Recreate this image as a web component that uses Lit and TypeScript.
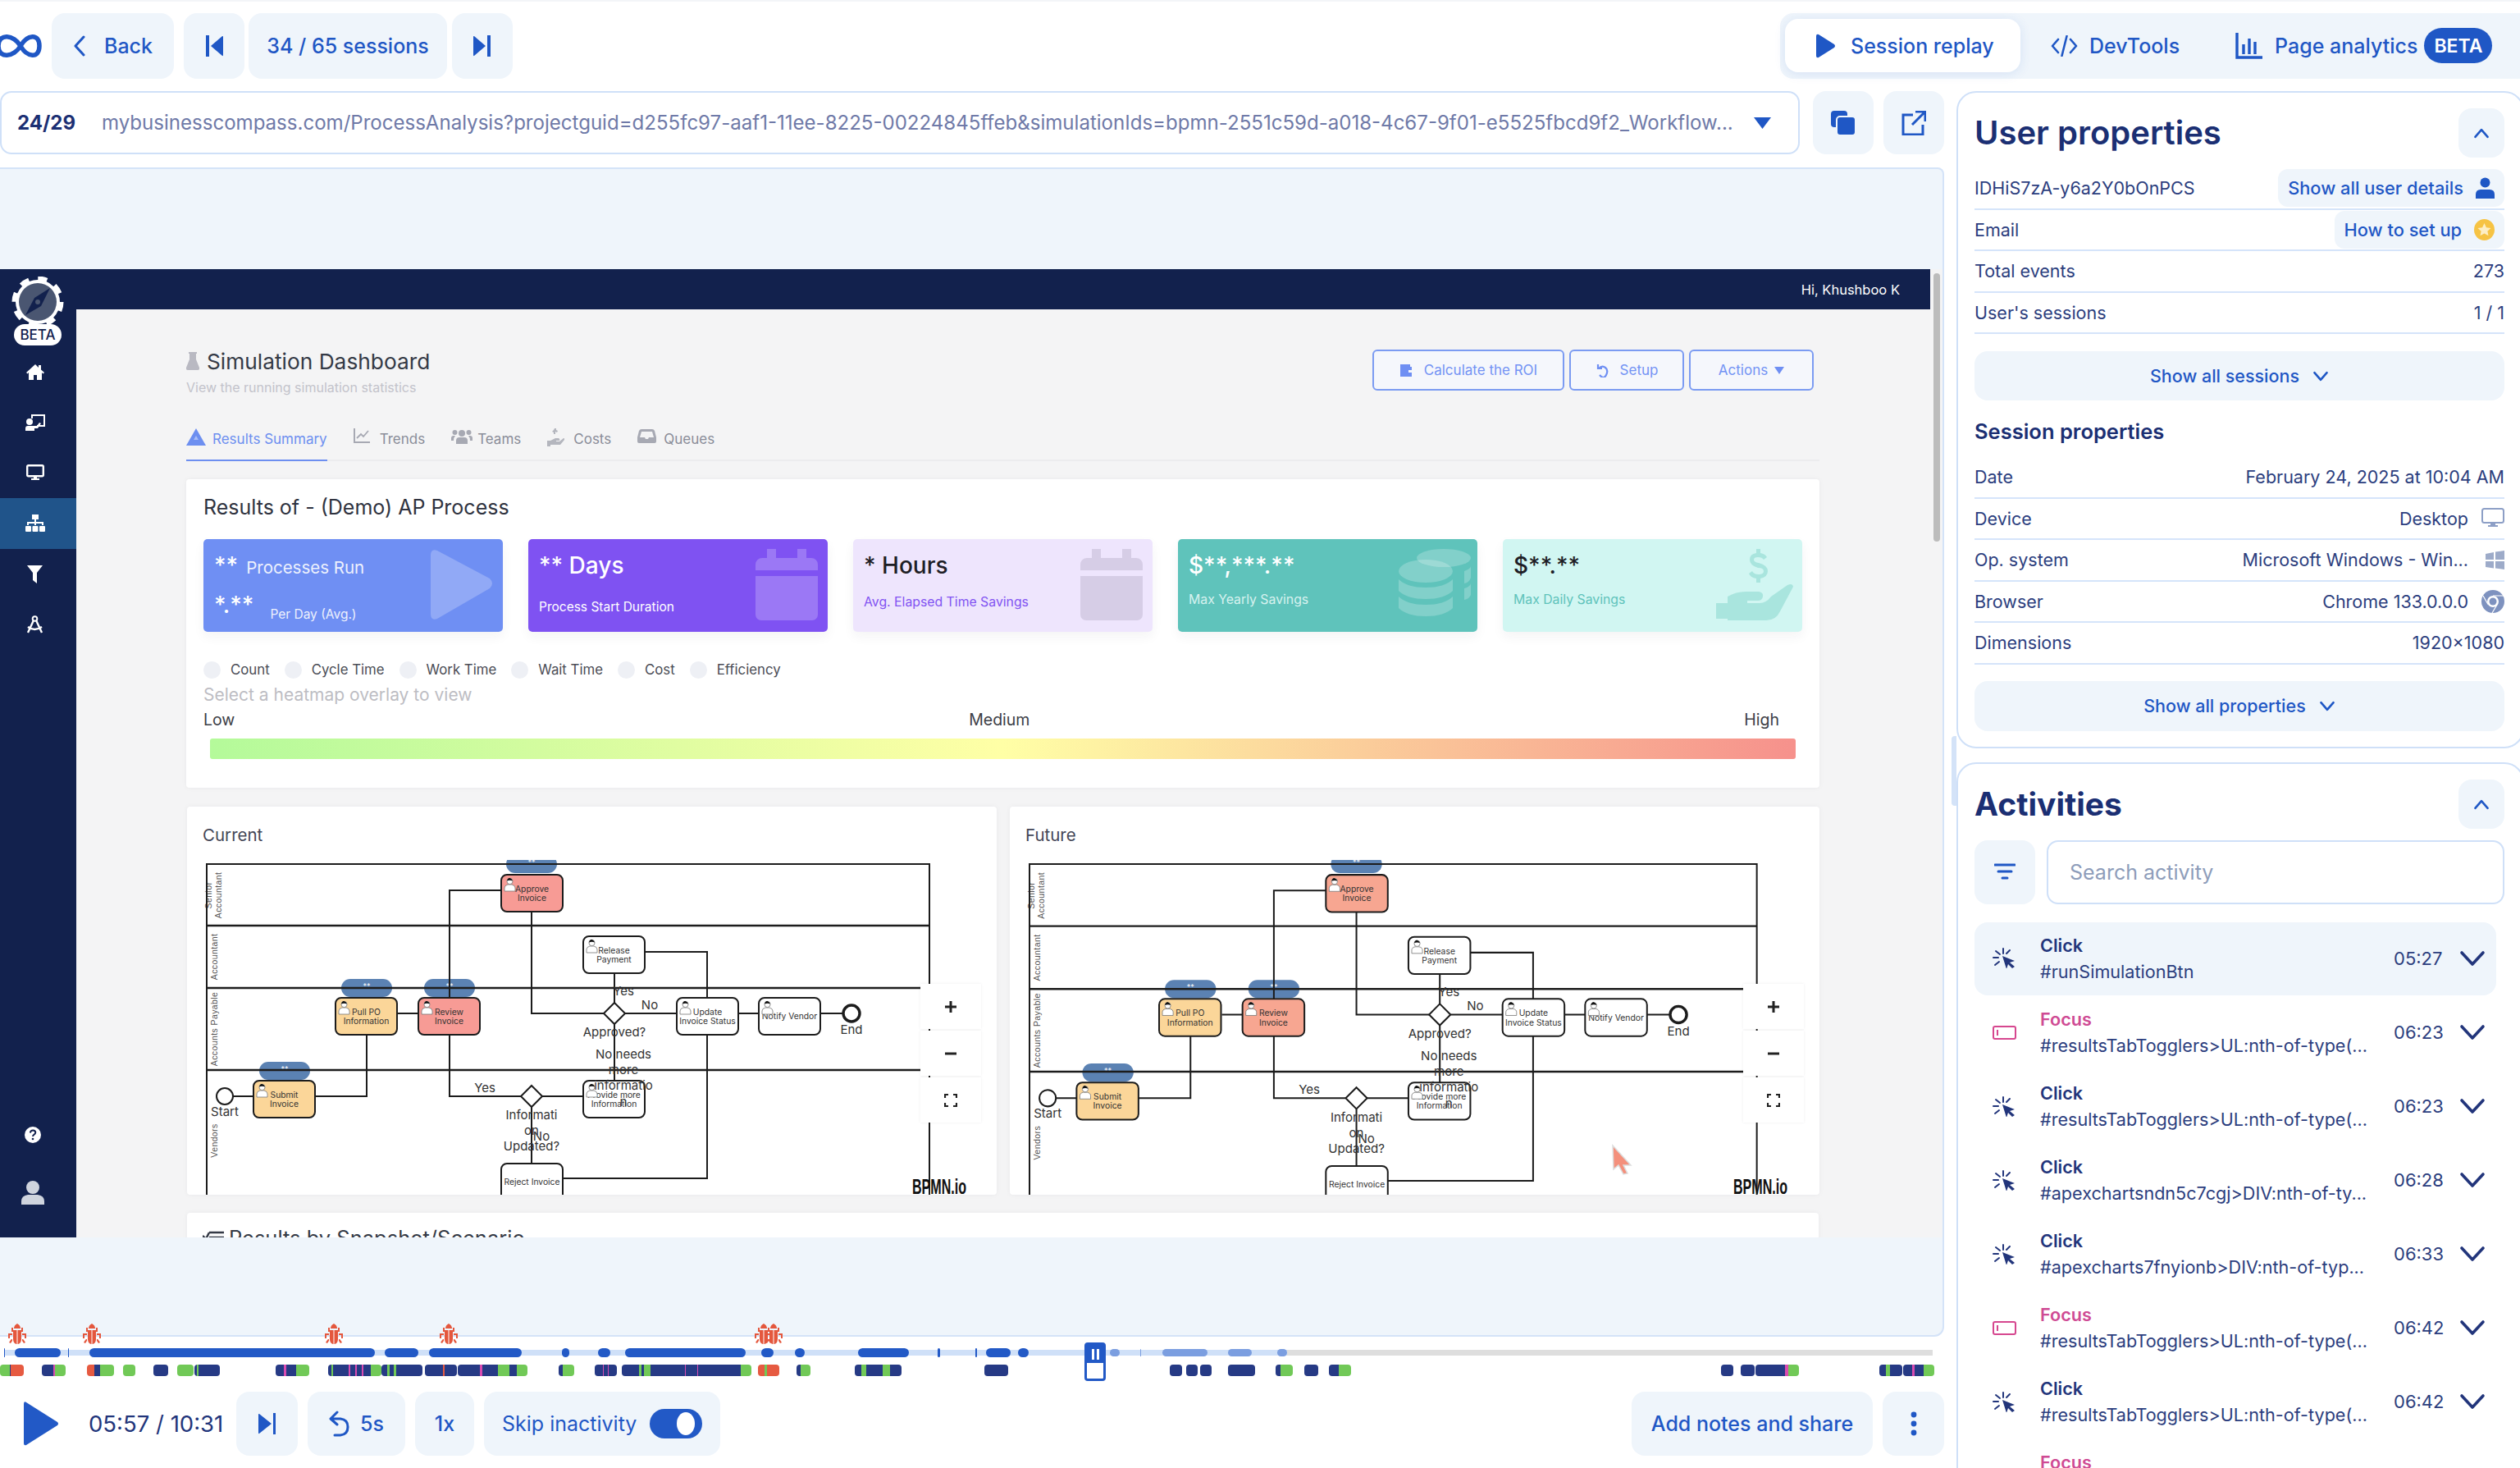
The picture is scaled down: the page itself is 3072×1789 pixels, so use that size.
import {LitElement, html, svg, css} from "lit"
import {customElement} from "lit/decorators.js"

type Stop = [number, string]
const NAVY = "#263a85", GREEN = "#71c957", RED = "#e65a41", PINK = "#d84bb0"

// event strip under the track: [start, [[end, colour], ...]]
const EVENT_GROUPS: [number, Stop[]][] = [
    [0, [[12, GREEN], [13, NAVY], [29, RED]]],
    [51, [[65, NAVY], [67, PINK], [80, GREEN]]],
    [106, [[115, RED], [122, NAVY], [139, GREEN]]],
    [150, [[165, GREEN]]],
    [187, [[205, NAVY]]],
    [216, [[236, GREEN]]],
    [237, [[240, NAVY], [242, GREEN], [268, NAVY]]],
    [336, [[346, NAVY], [349, PINK], [361, NAVY], [377, GREEN]]],
    [400, [[404, NAVY], [406, GREEN], [425, NAVY], [427, PINK], [433, NAVY], [435, PINK], [441, NAVY], [443, PINK], [452, NAVY], [465, GREEN]]],
    [465, [[472, NAVY], [475, GREEN], [480, NAVY], [483, GREEN], [515, NAVY]]],
    [518, [[540, NAVY], [542, RED], [557, NAVY]]],
    [558, [[585, NAVY], [588, PINK], [607, NAVY], [621, GREEN], [630, NAVY], [643, GREEN]]],
    [681, [[686, NAVY], [700, GREEN]]],
    [725, [[735, NAVY], [736, PINK], [741, NAVY], [742, PINK], [752, NAVY]]],
    [758, [[779, NAVY], [782, GREEN], [785, NAVY], [793, GREEN], [835, NAVY], [836, PINK], [850, NAVY], [851, PINK], [903, NAVY], [916, GREEN]]],
    [924, [[932, RED], [935, GREEN], [950, RED]]],
    [971, [[976, NAVY], [988, GREEN]]],
    [1042, [[1050, NAVY], [1056, GREEN], [1076, NAVY], [1085, GREEN], [1099, NAVY]]],
    [1200, [[1229, NAVY]]],
    [1426, [[1441, NAVY]]],
    [1446, [[1460, NAVY]]],
    [1463, [[1477, NAVY]]],
    [1497, [[1530, NAVY]]],
    [1555, [[1561, NAVY], [1576, GREEN]]],
    [1590, [[1607, NAVY]]],
    [1620, [[1632, NAVY], [1647, GREEN]]],
    [2098, [[2113, NAVY]]],
    [2122, [[2139, NAVY]]],
    [2140, [[2176, NAVY], [2180, PINK], [2193, GREEN]]],
    [2291, [[2299, NAVY], [2304, GREEN], [2319, NAVY]]],
    [2320, [[2331, NAVY], [2334, PINK], [2345, NAVY], [2358, GREEN]]],
]
const PLAYED: [number, number][] = [[5, 6], [18, 74], [83, 84], [109, 457], [469, 510], [523, 636], [685, 694], [729, 744], [762, 909], [928, 943], [969, 981], [1046, 1108], [1143, 1146], [1189, 1191], [1202, 1232], [1241, 1254]]
const UNPLAYED: [number, number][] = [[1353, 1365], [1390, 1391], [1417, 1472], [1497, 1526], [1557, 1569]]
const BUGS = [21, 112, 407, 547, 931, 943]

const ACTIVITIES = [
    ["Click", "#runSimulationBtn", "05:27"],
    ["Focus", "#resultsTabTogglers>UL:nth-of-type(...", "06:23"],
    ["Click", "#resultsTabTogglers>UL:nth-of-type(...", "06:23"],
    ["Click", "#apexchartsndn5c7cgj>DIV:nth-of-ty...", "06:28"],
    ["Click", "#apexcharts7fnyionb>DIV:nth-of-typ...", "06:33"],
    ["Focus", "#resultsTabTogglers>UL:nth-of-type(...", "06:42"],
    ["Click", "#resultsTabTogglers>UL:nth-of-type(...", "06:42"],
    ["Focus", "", ""],
]

const chevronDown = html`<svg class="chev-small" viewBox="0 0 18 12"><path d="M2 2l7 8 7-8" fill="none" stroke="currentColor" stroke-width="2.4" stroke-linecap="round" stroke-linejoin="round"/></svg>`
const chevronUp = html`<svg class="chev-up" viewBox="0 0 18 12"><path d="M2 10l7-8 7 8" fill="none" stroke="currentColor" stroke-width="2.4" stroke-linecap="round" stroke-linejoin="round"/></svg>`
const clickIcon = html`<svg class="act-icon" viewBox="0 0 29 25"><g fill="none" stroke="#22357b" stroke-width="2" stroke-linecap="round"><path d="M13 1v6M4 4l5 4M1 12h6M3 21l5-4M21 3l-4 4"/></g><path d="M12 10l15 6-6 2 6 5-3 2-5-5-2 6z" fill="#22357b"/></svg>`
const focusIcon = html`<svg class="act-icon" viewBox="0 0 29 18"><rect x="1" y="1.5" width="27" height="15" rx="2" fill="none" stroke="#d6478f" stroke-width="2"/><path d="M6 5.5v7" stroke="#d6478f" stroke-width="2"/></svg>`
const calendarIcon = html`<svg class="card-icon cal" viewBox="0 0 76 87"><path d="M14 0h11v11h26V0h11v11h6a8 8 0 0 1 8 8v7H0v-7a8 8 0 0 1 8-8h6z M0 33h76v47a7 7 0 0 1-7 7H7a7 7 0 0 1-7-7z" fill="currentColor"/></svg>`

// one BPMN task box, coordinates are page pixels
const task = (x: number, y: number, fill: string, lines: string[], h = 45) => {
    const mid = x + 37.5
    const ys = lines.length == 2 ? [y + 17, y + 28] : [y + 22]
    return svg`
        <rect x=${x} y=${y} width="75" height=${h} rx="7" fill=${fill} stroke="#1c1c1c" stroke-width="2"/>
        ${lines.map((l, i) => svg`<text class="task-label" x=${mid} y=${ys[i]} dy="4">${l}</text>`)}
        ${h == 45 ? svg`<g transform="translate(${x + 3} ${y + 3})">
            <path d="M1 17v-4q0-3 4-4h5q4 1 4 4v4z" fill="#fff" stroke="#777" stroke-width=".8"/>
            <circle cx="7.5" cy="5" r="3.6" fill="#fff" stroke="#777" stroke-width=".8"/>
            <path d="M4 4.5q1-4 3.5-3.5t3.5 3.5q-3.5-1.5-7 0z" fill="#111"/></g>` : ""}
    `
}
const badge = (x: number, y: number) => svg`
    <rect x=${x} y=${y} width="62" height="22" rx="11" fill="#5b82b3"/>
    <text class="badge-label" x=${x + 31} y=${y + 12}>**</text>`

const wire = (d: string) => svg`<path d=${d} fill="none" stroke="#1c1c1c" stroke-width="2"/>`
const flowLabel = (x: number, y: number, t: string) => svg`<text class="flow-label" x=${x} y=${y} dy="5">${t}</text>`
const laneLabel = (x: number, y: number, t: string) => svg`<text class="lane-label" transform="translate(${x} ${y}) rotate(-90)">${t}</text>`

const diagram = (hotFill: string) => svg`
    ${laneLabel(258, 1091, "Senior")}
    ${laneLabel(270, 1091, "Accountant")}
    ${laneLabel(265, 1166, "Accountant")}
    ${laneLabel(265, 1254, "Accounts Payable")}
    ${laneLabel(265, 1390, "Vendors")}
    ${badge(617, 1042)}${badge(416, 1193)}${badge(517, 1193)}${badge(316, 1294)}
    <path d="M252 1470V1053H1133V1470" fill="none" stroke="#1c1c1c" stroke-width="2"/>
    <path d="M252 1128H1133M252 1204H1133M252 1304H1133" fill="none" stroke="#1c1c1c" stroke-width="2.4"/>
    ${wire("M284 1336H309M384 1336H447V1261M485 1235H510")}
    ${wire("M548 1216V1085H611M548 1261V1336H635")}
    ${wire("M648 1110V1235H736M762 1235H825M749 1222V1185M749 1248V1317")}
    ${wire("M900 1235H925M1000 1235H1028M786 1160H862V1216M862 1261V1436H686")}
    ${wire("M661 1336H711M648 1349V1417")}
    ${task(611, 1066, hotFill, ["Approve", "Invoice"])}
    ${task(711, 1141, "#fff", ["Release", "Payment"])}
    ${task(409, 1216, "#fbd699", ["Pull PO", "Information"])}
    ${task(510, 1216, hotFill, ["Review", "Invoice"])}
    ${task(825, 1216, "#fff", ["Update", "Invoice Status"])}
    ${task(925, 1216, "#fff", ["Notify Vendor"])}
    ${task(309, 1317, "#fbd699", ["Submit", "Invoice"])}
    ${task(711, 1317, "#fff", ["Provide more", "Information"])}
    ${task(611, 1418, "#fff", ["Reject Invoice"], 60)}
    <circle cx="274" cy="1336" r="10" fill="#fff" stroke="#1c1c1c" stroke-width="2"/>
    <circle cx="1038" cy="1235" r="10" fill="#fff" stroke="#1c1c1c" stroke-width="3.4"/>
    <path d="M749 1222l13 13-13 13-13-13z M648 1323l13 13-13 13-13-13z" fill="#fff" stroke="#1c1c1c" stroke-width="2"/>
    ${flowLabel(760, 1208, "Yes")}
    ${flowLabel(792, 1225, "No")}
    ${flowLabel(749, 1258, "Approved?")}
    ${flowLabel(760, 1285, "No needs")}
    ${flowLabel(760, 1304, "more")}
    ${flowLabel(760, 1323, "informatio")}
    ${flowLabel(760, 1343, "n")}
    ${flowLabel(591, 1326, "Yes")}
    ${flowLabel(648, 1359, "Informati")}
    ${flowLabel(648, 1378, "on")}
    ${flowLabel(648, 1397, "Updated?")}
    ${flowLabel(660, 1385, "No")}
    ${flowLabel(274, 1355, "Start")}
    ${flowLabel(1038, 1255, "End")}
`

const zoomControls = html`
    <div class="zoom-ctl">
        <div class="zoom-cell"><svg viewBox="0 0 16 16"><path d="M8 1v14M1 8h14" stroke="#222" stroke-width="3"/></svg></div>
        <div class="zoom-cell"><svg viewBox="0 0 16 16"><path d="M1 8h14" stroke="#222" stroke-width="3"/></svg></div>
        <div class="zoom-cell"><svg viewBox="0 0 16 16"><path d="M1 5V1h4M11 1h4v4M15 11v4h-4M5 15H1v-4" fill="none" stroke="#222" stroke-width="2.2"/></svg></div>
    </div>`

@customElement("app-root")
export class AppRoot extends LitElement {
    static styles = css`
        :host {
            display: block;
            width: 3072px;
            height: 1789px;
            overflow: hidden;
            background: #fff;
            font-family: Inter, "Liberation Sans", sans-serif;
            color: #27397f;
            box-sizing: border-box;
        }
        * { box-sizing: border-box; }
        svg { display: block; flex: none; }

        /* top bar */
        .topbar {
            height: 96px;
            padding-top: 14px;
            border-top: 2px solid #f3f5f8;
            display: flex;
        }
        .logo { width: 63px; height: 80px; display: flex; align-items: center; }
        .nav { display: flex; }
        .btn {
            height: 78px;
            background: #eff5fb;
            border-radius: 16px;
            color: #1f57c5;
            font-size: 25px;
            font-weight: 500;
            display: flex;
            align-items: center;
            justify-content: center;
            flex: none;
        }
        .topbar .btn { height: 80px; }
        .back { width: 149px; gap: 22px; margin-right: 12px; }
        .skip { width: 74px; }
        .sessions { width: 242px; margin: 0 6px 0 5px; }
        .tabs {
            margin-left: auto;
            width: 902px;
            height: 80px;
            background: #eff5fb;
            border-radius: 16px 0 0 16px;
            padding: 7px 0 0 6px;
            display: flex;
            align-items: flex-start;
            font-size: 25px;
            font-weight: 500;
            color: #1f57c5;
        }
        .tab { height: 65px; display: flex; align-items: center; }
        .tab.active {
            width: 287px;
            background: #fff;
            border-radius: 16px;
            box-shadow: 0 2px 14px rgba(31, 87, 197, 0.12);
            padding-left: 37px;
            gap: 18px;
            margin-right: 37px;
        }
        .tab.dev { gap: 14px; margin-right: 68px; }
        .tab.analytics { gap: 15px; }
        .beta {
            width: 83px;
            height: 43px;
            border-radius: 22px;
            background: #1f57c5;
            color: #fff;
            font-size: 23px;
            font-weight: 600;
            display: flex;
            align-items: center;
            justify-content: center;
        }
        .tab.analytics .beta { margin-left: -7px; }

        .main { display: flex; margin-top: 15px; }
        .left { width: 2370px; flex: none; }

        /* url row */
        .url-row { display: flex; height: 77px; }
        .url-bar {
            width: 2194px;
            border: 2px solid #cfe0f8;
            border-radius: 14px;
            display: flex;
            align-items: center;
            padding: 0 32px 0 19px;
            font-size: 24px;
        }
        .url-pos { font-weight: 700; color: #1b2f73; width: 103px; flex: none; }
        .url-text { flex: 1; color: #6f7aa8; white-space: nowrap; overflow: hidden; font-weight: 400; font-size: 24.05px; }
        .url-caret { width: 23px; height: 15px; margin-left: 24px; }
        .icon-btn { width: 74px; height: 77px; margin-left: 12px; }
        .icon-btn.first { margin-left: 16px; }

        /* replay frame */
        .replay {
            margin-top: 16px;
            height: 1425px;
            background: #eff5fb;
            border: 2px solid #d4e3f8;
            border-left: none;
            border-radius: 0 8px 12px 0;
            padding-top: 122px;
        }
        .frame-wrap { display: flex; height: 1180px; }
        .scrollbar { width: 15px; background: #f4f4f5; padding: 5px 3px 0 4px; }
        .thumb { height: 327px; background: #bcbcbc; border-radius: 4px; }

        .app {
            position: relative;
            width: 2354px;
            height: 1180px;
            overflow: hidden;
            background: #f4f4f5;
            display: flex;
            flex-direction: column;
            font-family: Inter, "Liberation Sans", sans-serif;
        }
        .app-head {
            height: 49px;
            background: #12214d;
            color: #fff;
            font-size: 16.5px;
            display: flex;
            align-items: center;
            justify-content: flex-end;
            padding-right: 37px;
            flex: none;
        }
        .app-body { display: flex; flex: 1; min-height: 0; }
        .side {
            width: 93px;
            background: #12214d;
            padding: 45px 0 20px;
            display: flex;
            flex-direction: column;
            flex: none;
        }
        .side-item { height: 61.7px; display: flex; align-items: center; justify-content: center; padding-right: 8px; }
        .side-item.active { background: #20548a; }
        .side-gap { flex: 1; }
        .side-low { height: 70px; display: flex; align-items: center; justify-content: center; padding-right: 13px; }
        .brand { position: absolute; left: 14px; top: 9px; }

        .page { flex: 1; min-width: 0; padding: 49px 135px 0 134px; overflow: hidden; }
        .page-head { height: 50px; display: flex; justify-content: space-between; }
        .page-title { display: flex; align-items: center; gap: 9px; height: 28px; font-size: 26.3px; color: #343a46; font-weight: 400; }
        .page-sub { margin-top: 8px; font-size: 16px; line-height: 20px; color: #c3c3cb; }
        .head-btns { display: flex; gap: 6px; margin-right: 7px; }
        .outline {
            height: 50px;
            border: 2px solid #7b9bf2;
            border-radius: 6px;
            background: #f5f7fc;
            color: #7393f4;
            font-size: 17px;
            display: flex;
            align-items: center;
            justify-content: center;
            gap: 14px;
        }
        .roi { width: 234px; }
        .setup { width: 140px; }
        .actions { width: 152px; gap: 8px; }

        .page-tabs {
            margin-top: 46px;
            height: 40px;
            border-bottom: 2px solid #ececee;
            display: flex;
            font-size: 17px;
            color: #8a8d99;
        }
        .page-tab { height: 40px; display: flex; align-items: flex-start; line-height: 26px; padding-right: 32px; }
        .tab-ico { width: 32px; flex: none; }
        .page-tab.on { color: #6d8ff0; border-bottom: 2px solid #6d8ff0; padding-right: 0; margin-right: 32px; }

        .card { background: #fff; border-radius: 4px; box-shadow: 0 0 6px rgba(40, 40, 60, 0.05); }
        .results { margin-top: 22px; height: 376px; padding: 17px 21px 0; }
        .results-title { font-size: 25px; line-height: 34px; color: #2f3340; }
        .stats { margin-top: 22px; display: grid; grid-template-columns: repeat(5, 1fr); gap: 31px; height: 111px; }
        .stat {
            border-radius: 5px;
            padding: 12px 14px 12px 13px;
            display: flex;
            justify-content: space-between;
            box-shadow: 0 6px 14px rgba(40, 40, 60, 0.05);
        }
        .s1 { background: #6f8ff3; color: #fff; }
        .s2 { background: #7f52f2; color: #fff; }
        .s3 { background: #eee5fd; color: #1e1e26; }
        .s4 { background: #5fc3bb; color: #fff; }
        .s5 { background: #d1f6f2; color: #1e1e26; }
        .stat-text { display: flex; flex-direction: column; white-space: nowrap; }
        .stat-big { font-size: 28px; line-height: 40px; font-weight: 500; }
        .stat-num { font-size: 28px; line-height: 40px; font-weight: 500; }
        .stat-sub { font-size: 15.5px; line-height: 20px; margin-top: 21px; }
        .s3 .stat-sub { color: #8254f2; margin-top: 15px; font-size: 15.8px; }
        .s4 .stat-sub { color: #d7f2ef; margin-top: 12px; font-size: 15.8px; }
        .s5 .stat-sub { color: #5fc3bb; margin-top: 12px; font-size: 15.8px; }
        .stat-line { display: flex; align-items: center; gap: 10px; }
        .stat-line.lower { margin-top: 8px; gap: 20px; align-items: flex-start; }
        .stat-line .run { font-size: 20.5px; opacity: 0.88; margin-top: 4px; }
        .stat-line .avg { font-size: 15.5px; margin-top: 22px; opacity: 0.88; }
        .card-icon { margin-right: -1px; }
        .cal { width: 76px; height: 87px; margin-right: -2px; }
        .s2 .cal { color: rgba(255, 255, 255, 0.22); }
        .s3 .cal { color: #d6cde6; }
        .play-ghost { width: 76px; height: 87px; margin-right: -2px; }
        .coins { width: 88px; height: 87px; margin-right: -6px; }
        .hand { width: 94px; height: 87px; margin-right: -3px; }

        .radios { margin-top: 37px; height: 22px; display: flex; gap: 18px; font-size: 16.8px; color: #4a4c55; }
        .radio { display: flex; align-items: center; gap: 12px; }
        .dot { width: 21px; height: 21px; border-radius: 50%; background: #eef0f5; }
        .hint { margin-top: 8px; font-size: 21px; line-height: 24px; color: #bdbdc3; }
        .scale {
            margin-top: 6px;
            height: 24px;
            line-height: 24px;
            font-size: 19.5px;
            color: #3c3e46;
            display: flex;
            justify-content: space-between;
            padding-right: 28px;
        }
        .scale .mid { padding-left: 24px; }
        .heat {
            margin: 11px 8px 0;
            height: 25px;
            border-radius: 3px;
            background: linear-gradient(90deg, #b4fa9a 0%, #ffffa6 50%, #f6918c 100%);
        }

        .diagrams { margin-top: 23px; display: flex; gap: 16px; height: 473px; margin-left: 1px; margin-right: 1px; }
        .diagram { width: 987px; flex: none; padding-top: 21px; }
        .diagram-title { font-size: 20.5px; line-height: 28px; color: #434656; padding-left: 19px; height: 44px; }
        .canvas { position: relative; height: 408px; overflow: hidden; }
        .zoom-ctl { position: absolute; right: 19px; top: 151px; width: 74px; display: flex; flex-direction: column; gap: 2px; }
        .zoom-cell {
            height: 55px;
            background: #fff;
            box-shadow: 0 0 3px rgba(40, 40, 60, 0.08);
            display: flex;
            align-items: center;
            justify-content: center;
        }
        .zoom-cell svg { width: 16px; height: 16px; }
        .next-card {
            margin: 22px 1px 0;
            height: 60px;
            padding: 16px 19px 0;
            font-size: 25.5px;
            line-height: 30px;
            color: #343a46;
            display: flex;
            gap: 6px;
        }
        .task-label { font: 10.3px Inter, "Liberation Sans", sans-serif; fill: #333; text-anchor: middle; }
        .badge-label { font: 9px Inter, "Liberation Sans", sans-serif; fill: #fff; text-anchor: middle; }
        .flow-label { font: 15px Inter, "Liberation Sans", sans-serif; fill: #333; text-anchor: middle; }
        .lane-label { font: 10.5px "Liberation Sans", sans-serif; fill: #555; text-anchor: middle; letter-spacing: 0.4px; }
        .bpmn { font: bold 25px "Liberation Sans", sans-serif; fill: #111; }

        /* timeline */
        .timeline { position: relative; height: 65px; }
        .track { position: absolute; height: 7px; top: 16px; }
        .seg { position: absolute; height: 11px; top: 14px; border-radius: 6px; }
        .seg.on { background: #2259c6; }
        .seg.off { background: #7b9ee0; height: 9px; top: 15px; }
        .group { position: absolute; top: 34px; height: 14px; border-radius: 4px; overflow: hidden; display: flex; }
        .group div { height: 100%; flex: none; }
        .bug { position: absolute; top: -16px; width: 24px; height: 25px; }
        .playhead {
            position: absolute;
            left: 1322px;
            top: 7px;
            width: 26px;
            height: 47px;
            border: 3px solid #2259c6;
            border-radius: 4px;
            background: #fff;
        }
        .playhead-top {
            height: 22px;
            background: #2259c6;
            display: flex;
            justify-content: center;
            align-items: center;
            gap: 3px;
        }
        .playhead-top i { width: 3px; height: 13px; background: #fff; display: block; }

        /* player controls */
        .controls { display: flex; align-items: center; height: 78px; margin-top: 2px; }
        .play { margin-left: 29px; width: 43px; height: 54px; }
        .clock { margin-left: 36px; width: 180px; font-size: 27.5px; color: #22357b; white-space: nowrap; }
        .controls .btn { margin-right: 12px; }
        .b-next { width: 75px; }
        .b-back { width: 119px; gap: 12px; margin-left: 0; }
        .b-rate { width: 72px; }
        .b-skip { width: 288px; justify-content: flex-start; padding-left: 22px; gap: 16px; font-weight: 400; }
        .toggle { width: 64px; height: 36px; border-radius: 18px; background: #2259c6; display: flex; align-items: center; justify-content: flex-end; padding-right: 9px; }
        .toggle i { width: 22px; height: 28px; background: #fff; border-radius: 50%; display: block; }
        .b-notes { width: 294px; margin-left: auto; }
        .controls .b-more { width: 75px; margin-right: 0; }

        /* right column */
        .right { margin-left: 15px; width: 692px; flex: none; position: relative; }
        .handle { position: absolute; left: -6px; top: 786px; width: 6px; height: 85px; background: #d4e3f8; border-radius: 4px 0 0 4px; }
        .panel { border: 2px solid #cfe0f8; border-radius: 24px; padding: 19px 0 0 20px; }
        .user-panel { height: 801px; }
        .act-panel { margin-top: 17px; height: 900px; }
        .content { width: 646px; }
        .panel-head { display: flex; align-items: center; justify-content: space-between; height: 60px; }
        .panel-head h2 { margin: 0; font-size: 40px; line-height: 60px; font-weight: 600; color: #1b2f73; }
        .act-panel h2 { font-weight: 700; font-size: 39px; }
        .collapse { width: 56px; height: 60px; background: #eff5fb; border-radius: 16px; display: flex; align-items: center; justify-content: center; color: #1f57c5; }
        .chev-up { width: 20px; height: 13px; }
        .chev-small { width: 20px; height: 13px; }
        .rows { margin-top: 13px; }
        .rows.session { margin-top: 15px; }
        .row {
            height: 50.5px;
            border-bottom: 2px solid #d5e4fa;
            display: flex;
            align-items: center;
            justify-content: space-between;
            font-size: 21.5px;
            color: #2c3e7e;
        }
        .val { display: flex; align-items: center; gap: 16px; }
        .pill {
            height: 46px;
            background: #eff5fb;
            border-radius: 12px;
            padding: 0 12px;
            display: flex;
            align-items: center;
            gap: 15px;
            color: #1f57c5;
            font-size: 21.8px;
            font-weight: 500;
        }
        .show {
            height: 60px;
            background: #eff5fb;
            border-radius: 16px;
            display: flex;
            align-items: center;
            justify-content: center;
            gap: 16px;
            color: #1f57c5;
            font-size: 21.5px;
            font-weight: 500;
        }
        .show.sessions-btn { margin-top: 21px; }
        .show.props-btn { margin-top: 20px; height: 61px; }
        .session-title { margin: 22px 0 0; font-size: 25.5px; line-height: 32px; font-weight: 600; color: #1b2f73; }

        .search-row { margin-top: 14px; display: flex; gap: 14px; height: 78px; }
        .filter { width: 74px; background: #eff5fb; border-radius: 16px; display: flex; align-items: center; justify-content: center; flex: none; }
        .search {
            flex: 1;
            border: 2px solid #cfe0f8;
            border-radius: 14px;
            display: flex;
            align-items: center;
            padding-left: 26px;
            font-size: 25px;
            color: #8e9dba;
        }
        .activities { margin-top: 22px; width: 636px; }
        .activity { height: 90px; padding: 0 13px 2px 22px; display: flex; align-items: center; border-radius: 16px; }
        .activity.sel { background: #eff5fb; height: 89px; margin-bottom: 1px; }
        .act-icon { width: 29px; height: 25px; flex: none; }
        .act-text { margin-left: 29px; flex: 1; min-width: 0; font-size: 21.6px; line-height: 32px; white-space: nowrap; color: #2c3e7e; }
        .act-target { min-height: 32px; }
        .act-name { font-weight: 600; color: #22357b; }
        .act-name.focus { color: #cf4b94; }
        .act-time { font-size: 22px; width: 80px; flex: none; color: #2c3e7e; }
        .act-chev { width: 32px; height: 20px; flex: none; }
    `

    renderTopbar() {
        return html`
            <div class="topbar">
                <div class="logo">
                    <svg width="63" height="40" viewBox="0 0 63 40"><path d="M25 20C33 6 48 4 48 20 48 36 33 34 25 20 17 6-2 4-2 20-2 36 17 34 25 20Z" fill="none" stroke="#1f57c5" stroke-width="5.5"/></svg>
                </div>
                <div class="nav">
                    <div class="btn back">
                        <svg width="16" height="26" viewBox="0 0 16 26"><path d="M13 2L3 13l10 11" fill="none" stroke="#1f57c5" stroke-width="3" stroke-linecap="round" stroke-linejoin="round"/></svg>
                        <span>Back</span>
                    </div>
                    <div class="btn skip"><svg width="22" height="26" viewBox="0 0 22 26"><path d="M1 0h4v26H1zM7 13L21 1q1-.5 1 1v22q0 1.500-1 1z" fill="#1f57c5"/></svg></div>
                    <div class="btn sessions">34 / 65 sessions</div>
                    <div class="btn skip"><svg width="22" height="26" viewBox="0 0 22 26"><path d="M17 0h4v26h-4zM15 13L1 1Q0 .5 0 2v22q0 1.500 1 1z" fill="#1f57c5"/></svg></div>
                </div>
                <div class="tabs">
                    <div class="tab active">
                        <svg width="25" height="30" viewBox="0 0 25 30"><path d="M1 3q0-3 3-2l19 12q2 2 0 4L4 29q-3 1-3-2z" fill="#1f57c5"/></svg>
                        <span>Session replay</span>
                    </div>
                    <div class="tab dev">
                        <svg width="33" height="26" viewBox="0 0 33 26"><path d="M9 5l-7 8 7 8M24 5l7 8-7 8M19.500 1l-6 24" fill="none" stroke="#1f57c5" stroke-width="2.6" stroke-linecap="round" stroke-linejoin="round"/></svg>
                        <span>DevTools</span>
                    </div>
                    <div class="tab analytics">
                        <svg width="33" height="32" viewBox="0 0 33 32"><path d="M2 0v30h31M10 14v12M17 7v19M24 11v15" fill="none" stroke="#1f57c5" stroke-width="3.4"/></svg>
                        <span>Page analytics</span>
                        <span class="beta">BETA</span>
                    </div>
                </div>
            </div>`
    }

    renderSidebar() {
        return html`
            <div class="side">
                <div class="side-item"><svg width="22" height="20" viewBox="0 0 22 20"><path d="M11 1L0 11l1.500 1.500L3 11v9h6v-6h4v6h6v-9l1.500 1.500L22 11l-4-3.500V2h-3v3z" fill="#fff"/></svg></div>
                <div class="side-item"><svg width="24" height="20" viewBox="0 0 24 20"><path d="M7 2V0h17v15H14v-2h8V2H9v3H7z" fill="#fff"/><circle cx="5" cy="9" r="4" fill="#fff"/><path d="M0 20v-3q0-3 3-3h11l3-4 2 1-4 6h-4v3z" fill="#fff"/></svg></div>
                <div class="side-item"><svg width="22" height="20" viewBox="0 0 22 20"><rect x="1.200" y="1.200" width="19.600" height="13" rx="1.500" fill="none" stroke="#fff" stroke-width="2.400"/><path d="M9 15h4v2h3v2H6v-2h3z" fill="#fff"/></svg></div>
                <div class="side-item active"><svg width="24" height="21" viewBox="0 0 24 21"><path d="M8 0h8v6h-3v3h9v4h-2v-2h-7v2h-2v-2H4v2H2V9h9V6H8z" fill="#fff"/><rect x="0" y="14" width="7" height="7" rx="1" fill="#fff"/><rect x="8.500" y="14" width="7" height="7" rx="1" fill="#fff"/><rect x="17" y="14" width="7" height="7" rx="1" fill="#fff"/></svg></div>
                <div class="side-item"><svg width="20" height="22" viewBox="0 0 20 22"><path d="M0 0h19l-7 9v13l-5-4V9z" fill="#fff"/></svg></div>
                <div class="side-item"><svg width="20" height="22" viewBox="0 0 20 22"><circle cx="9.500" cy="4" r="2.800" fill="none" stroke="#fff" stroke-width="2"/><path d="M8 6L1 21M11 6l7 15M1 14q8 6 17 0" fill="none" stroke="#fff" stroke-width="2.400"/></svg></div>
                <div class="side-gap"></div>
                <div class="side-low"><svg width="20" height="20" viewBox="0 0 20 20"><circle cx="10" cy="10" r="10" fill="#fff"/><path d="M6.800 7.500q.5-3 3.400-3t3.100 2.600q0 1.700-2 2.800-1.200.7-1.200 2" fill="none" stroke="#12214d" stroke-width="2"/><circle cx="10" cy="15" r="1.300" fill="#12214d"/></svg></div>
                <div class="side-low"><svg width="28" height="30" viewBox="0 0 28 30"><circle cx="14" cy="9" r="8" fill="#cfd4de"/><path d="M0 30v-4q0-7 8-8h12q8 1 8 8v4z" fill="#cfd4de"/></svg></div>
            </div>`
    }

    renderStats() {
        return html`
            <div class="stats">
                <div class="stat s1">
                    <div class="stat-text">
                        <div class="stat-line"><span class="stat-num">**</span><span class="run">Processes Run</span></div>
                        <div class="stat-line lower"><span class="stat-num">*.**</span><span class="avg">Per Day (Avg.)</span></div>
                    </div>
                    <svg class="play-ghost" viewBox="0 0 76 87"><path d="M0 8q0-9 8-6l64 34q6 6 0 12L8 85q-8 3-8-6z" fill="#fff" fill-opacity=".24"/></svg>
                </div>
                <div class="stat s2">
                    <div class="stat-text">
                        <div class="stat-big">** Days</div>
                        <div class="stat-sub">Process Start Duration</div>
                    </div>
                    ${calendarIcon}
                </div>
                <div class="stat s3">
                    <div class="stat-text">
                        <div class="stat-big">* Hours</div>
                        <div class="stat-sub">Avg. Elapsed Time Savings</div>
                    </div>
                    ${calendarIcon}
                </div>
                <div class="stat s4">
                    <div class="stat-text">
                        <div class="stat-num">$**,***.**</div>
                        <div class="stat-sub">Max Yearly Savings</div>
                    </div>
                    <svg class="coins" viewBox="0 0 88 87" fill="#fff" fill-opacity=".22">
                        <ellipse cx="55" cy="11" rx="33" ry="11"/><path d="M80 27q8-3 8-6v14q-2 6-8 7zM80 48q7-2 8-6v14q-2 5-8 6z"/>
                        <ellipse cx="33" cy="27" rx="33" ry="14" /><path d="M0 37q10 10 33 10t33-10v14q-10 10-33 10T0 51zM0 58q10 10 33 10t33-10v14q-10 10-33 10T0 72z"/>
                    </svg>
                </div>
                <div class="stat s5">
                    <div class="stat-text">
                        <div class="stat-num">$**.**</div>
                        <div class="stat-sub">Max Daily Savings</div>
                    </div>
                    <svg class="hand" viewBox="0 0 94 87" fill="#a9e5de">
                        <path d="M49 0h5v5q6 1 8 5l-4 3q-2-3-7-3t-5 3 6 4q11 3 11 10t-9 9v5h-5v-5q-7-1-9-6l4-3q2 4 8 4t6-4-7-4q-10-3-10-10t8-8z"/>
                        <path d="M0 66h14V58q10-6 22-6h16q6 1 5 6t-6 5H38v3h15q8 0 14-8l20-14q6-3 7 2l-16 30q-5 11-17 11H14v-2H0z"/>
                    </svg>
                </div>
            </div>`
    }

    renderPage() {
        const radios = ["Count", "Cycle Time", "Work Time", "Wait Time", "Cost", "Efficiency"]
        return html`
            <div class="page">
                <div class="page-head">
                    <div>
                        <div class="page-title">
                            <svg width="16" height="22" viewBox="0 0 16 22"><path d="M3 0h10v2h-1v7l4 10q.5 3-2 3H2q-2.500 0-2-3L4 9V2H3z" fill="#b9b9c2"/></svg>
                            <span>Simulation Dashboard</span>
                        </div>
                        <div class="page-sub">View the running simulation statistics</div>
                    </div>
                    <div class="head-btns">
                        <div class="outline roi">
                            <svg width="16" height="16" viewBox="0 0 16 16"><path d="M1 1h12v3h2v12H1z" fill="#6f8ff3"/><path d="M11 8h4v3h-4z" fill="#f5f7fc"/></svg>
                            <span>Calculate the ROI</span>
                        </div>
                        <div class="outline setup">
                            <svg width="16" height="18" viewBox="0 0 16 18"><path d="M3 2v5h5M4 7q4-4 8-1t1 9-8 0" fill="none" stroke="#6f8ff3" stroke-width="2.200"/></svg>
                            <span>Setup</span>
                        </div>
                        <div class="outline actions">
                            <span>Actions</span>
                            <svg width="12" height="9" viewBox="0 0 12 9"><path d="M0 0h12L6 9z" fill="#6f8ff3"/></svg>
                        </div>
                    </div>
                </div>
                <div class="page-tabs">
                    <div class="page-tab on">
                        <span class="tab-ico"><svg width="24" height="21" viewBox="0 0 24 21"><path d="M12 0l12 21H0z" fill="#6d8ff0"/><path d="M12 9l3 5h-6z" fill="#a9bdf6"/></svg></span>
                        <span>Results Summary</span>
                    </div>
                    <div class="page-tab">
                        <span class="tab-ico"><svg width="20" height="18" viewBox="0 0 20 18"><path d="M1 0v17h19" fill="none" stroke="#a7a9b3" stroke-width="2"/><path d="M4 12l5-5 3 3 6-7" fill="none" stroke="#a7a9b3" stroke-width="1.800"/></svg></span>
                        <span>Trends</span>
                    </div>
                    <div class="page-tab">
                        <span class="tab-ico"><svg width="26" height="20" viewBox="0 0 26 20"><g fill="#a7a9b3"><circle cx="13" cy="6" r="4"/><circle cx="4.500" cy="5" r="3"/><circle cx="21.500" cy="5" r="3"/><path d="M6 19v-4q0-4 4-4h6q4 0 4 4v4zM0 15v-3q0-3 3-3h2q-2 2-2 6zM26 15v-3q0-3-3-3h-2q2 2 2 6z"/></g></svg></span>
                        <span>Teams</span>
                    </div>
                    <div class="page-tab">
                        <span class="tab-ico"><svg width="21" height="22" viewBox="0 0 21 22"><g fill="#b4b6be"><path d="M9 0h2v2l2 1-1 2-2-1v3H8V5L6 4l2-2zM0 15h4l6-3h4q2 1 1 3h-4v1h4l5-4q2 0 1 2l-5 6H4v2H0z"/></g></svg></span>
                        <span>Costs</span>
                    </div>
                    <div class="page-tab">
                        <span class="tab-ico"><svg width="23" height="18" viewBox="0 0 23 18"><path d="M5 1h13q2 0 3 2l2 8v5q0 2-2 2H2q-2 0-2-2v-5l2-8q1-2 3-2zm0 3l-2 7h6l1 2h3l1-2h6l-2-7z" fill="#a7a9b3"/></svg></span>
                        <span>Queues</span>
                    </div>
                </div>
                <div class="card results">
                    <div class="results-title">Results of - (Demo) AP Process</div>
                    ${this.renderStats()}
                    <div class="radios">
                        ${radios.map(r => html`<div class="radio"><span class="dot"></span><span>${r}</span></div>`)}
                    </div>
                    <div class="hint">Select a heatmap overlay to view</div>
                    <div class="scale"><span>Low</span><span class="mid">Medium</span><span>High</span></div>
                    <div class="heat"></div>
                </div>
                <div class="diagrams">
                    <div class="card diagram">
                        <div class="diagram-title">Current</div>
                        <div class="canvas">
                            <svg width="987" height="408" viewBox="228 1048 987 408">
                                ${diagram("#f79b95")}
                                <text class="bpmn" x="1112" y="1455" textLength="66" lengthAdjust="spacingAndGlyphs">BPMN.io</text>
                            </svg>
                            ${zoomControls}
                        </div>
                    </div>
                    <div class="card diagram">
                        <div class="diagram-title">Future</div>
                        <div class="canvas">
                            <svg width="987" height="408" viewBox="1231 1048 987 408">
                                <g transform="translate(1001.400 -8.400) scale(1.0064 1.008)">${diagram("#f7a691")}</g>
                                <text class="bpmn" x="2113" y="1455" textLength="66" lengthAdjust="spacingAndGlyphs">BPMN.io</text>
                                <path d="M1966 1396l22 24h-9l5 10-5 1-6-11-6 5z" fill="#f4907c" stroke="#ddd" stroke-width="1.500"/>
                            </svg>
                            ${zoomControls}
                        </div>
                    </div>
                </div>
                <div class="card next-card">
                    <svg width="26" height="26" viewBox="0 0 26 26"><path d="M8 8h18M8 14h18M8 20h18M0 12l4 4 4-8" fill="none" stroke="#343a46" stroke-width="2.500"/></svg>
                    <span>Results by Snapshot/Scenario</span>
                </div>
            </div>`
    }

    renderApp() {
        return html`
            <div class="app">
                <div class="app-head">Hi, Khushboo K</div>
                <div class="app-body">
                    ${this.renderSidebar()}
                    ${this.renderPage()}
                </div>
                <svg class="brand" width="64" height="84" viewBox="0 0 64 84">
                    <circle cx="32" cy="31" r="28" fill="none" stroke="#fff" stroke-width="7" stroke-dasharray="11 11"/>
                    <circle cx="32" cy="31" r="27" fill="#fff"/>
                    <circle cx="32" cy="31" r="23" fill="#4a5671"/>
                    <path d="M47 14L36 36 17 47 28 26z" fill="#12214d"/>
                    <circle cx="32" cy="31" r="3" fill="#4a5671"/>
                    <rect x="3" y="58" width="58" height="26" rx="13" fill="#fff"/>
                    <text x="32" y="77" text-anchor="middle" font-family="Inter, sans-serif" font-size="17" font-weight="500" fill="#12214d">BETA</text>
                </svg>
            </div>`
    }

    renderTimeline() {
        return html`
            <div class="timeline">
                <div class="track" style="left:5px;width:1564px;background:#cfe0f8"></div>
                <div class="track" style="left:1569px;width:787px;background:#dedede"></div>
                ${PLAYED.map(([a, b]) => html`<div class="seg on" style="left:${a}px;width:${b - a}px"></div>`)}
                ${UNPLAYED.map(([a, b]) => html`<div class="seg off" style="left:${a}px;width:${b - a}px"></div>`)}
                ${EVENT_GROUPS.map(([start, stops]) => {
                    let prev = start
                    return html`<div class="group" style="left:${start}px">
                        ${stops.map(([end, colour]) => {
                            const w = end - prev
                            prev = end
                            return html`<div style="width:${w}px;background:${colour}"></div>`
                        })}
                    </div>`
                })}
                ${BUGS.map(x => html`
                    <svg class="bug" style="left:${x - 12}px" viewBox="0 0 24 25" fill="#e4573d">
                        <path d="M12 0q4 2 4 6H8q0-4 4-6z"/>
                        <path d="M7 8h10v11q0 5-4 6h-2q-4-1-4-6z"/>
                        <path d="M5 5h2v5h-2zM17 5h2v5h-2zM1 12h5v2H3v4H1zM18 12h5v6h-2v-4h-3zM5 19h1v2l-2 3-2-1 2-3zM18 19h1l1 1 2 3-2 1-2-3z"/>
                        <path d="M11.500 8h1v17h-1z" fill="#fff"/>
                    </svg>`)}
                <div class="playhead"><div class="playhead-top"><i></i><i></i></div></div>
            </div>`
    }

    renderControls() {
        return html`
            <div class="controls">
                <svg class="play" viewBox="0 0 43 54"><path d="M0 3q0-4 3-2l38 24q2 2 0 4L3 53q-3 1-3-2z" fill="#2259c6"/></svg>
                <div class="clock">05:57 / 10:31</div>
                <div class="btn b-next"><svg width="22" height="26" viewBox="0 0 22 26"><path d="M18 0h3v26h-3zM16 13L1 1Q0 .5 0 2v22q0 1.500 1 1z" fill="#1f57c5"/></svg></div>
                <div class="btn b-back">
                    <svg width="26" height="32" viewBox="0 0 26 32"><path d="M10 2L2 10l8 7M3 10h11q9 1 9 10t-9 10H7" fill="none" stroke="#1f57c5" stroke-width="3" stroke-linecap="round" stroke-linejoin="round"/></svg>
                    <span>5s</span>
                </div>
                <div class="btn b-rate">1x</div>
                <div class="btn b-skip">
                    <span>Skip inactivity</span>
                    <div class="toggle"><i></i></div>
                </div>
                <div class="btn b-notes">Add notes and share</div>
                <div class="btn b-more"><svg width="8" height="30" viewBox="0 0 8 30"><circle cx="4" cy="4" r="3.400" fill="#1f57c5"/><circle cx="4" cy="15" r="3.400" fill="#1f57c5"/><circle cx="4" cy="26" r="3.400" fill="#1f57c5"/></svg></div>
            </div>`
    }

    renderUserPanel() {
        return html`
            <div class="panel user-panel">
                <div class="content">
                    <div class="panel-head"><h2>User properties</h2><div class="collapse">${chevronUp}</div></div>
                    <div class="rows">
                        <div class="row"><span>IDHiS7zA-y6a2Y0bOnPCS</span>
                            <span class="pill">Show all user details
                                <svg width="23" height="26" viewBox="0 0 23 26"><circle cx="11.500" cy="6.500" r="6" fill="#1f57c5"/><path d="M0 26v-5q0-6 6-6h11q6 0 6 6v5z" fill="#1f57c5"/></svg>
                            </span>
                        </div>
                        <div class="row"><span>Email</span>
                            <span class="pill">How to set up
                                <svg width="25" height="26" viewBox="0 0 25 26"><ellipse cx="12.500" cy="13" rx="12.500" ry="13" fill="#f6c344"/><path d="M12.500 5l2.400 5.200 5.600.7-4.100 3.800 1.100 5.600-5-2.800-5 2.800 1.100-5.600-4.100-3.800 5.600-.7z" fill="#fdeec4"/></svg>
                            </span>
                        </div>
                        <div class="row"><span>Total events</span><span>273</span></div>
                        <div class="row"><span>User's sessions</span><span>1 / 1</span></div>
                    </div>
                    <div class="show sessions-btn"><span>Show all sessions</span>${chevronDown}</div>
                    <div class="session-title">Session properties</div>
                    <div class="rows session">
                        <div class="row"><span>Date</span><span>February 24, 2025 at 10:04 AM</span></div>
                        <div class="row"><span>Device</span>
                            <span class="val">Desktop
                                <svg width="28" height="25" viewBox="0 0 28 25"><rect x="1" y="1" width="26" height="17" rx="2.500" fill="none" stroke="#8d9fc6" stroke-width="2"/><path d="M11 18h6v3h3v2H8v-2h3z" fill="#8d9fc6"/></svg>
                            </span>
                        </div>
                        <div class="row"><span>Op. system</span>
                            <span class="val">Microsoft Windows - Win...
                                <svg width="28" height="23" viewBox="0 0 28 23"><path d="M5 4l10-2v9H5zM17 1.500L28 0v11H17zM5 13h10v8.500L5 20zM17 13h11v10l-11-1.500z" fill="#9dabc9"/></svg>
                            </span>
                        </div>
                        <div class="row"><span>Browser</span>
                            <span class="val">Chrome 133.0.0.0
                                <svg width="28" height="28" viewBox="0 0 28 28"><circle cx="14" cy="14" r="14" fill="#7e92bf"/><circle cx="14" cy="14" r="7" fill="#fff"/><circle cx="14" cy="14" r="4.500" fill="#7e92bf"/><path d="M14 7h13M8 17.500L2 7M19 18l-6 10" stroke="#fff" stroke-width="1.200"/></svg>
                            </span>
                        </div>
                        <div class="row"><span>Dimensions</span><span>1920×1080</span></div>
                    </div>
                    <div class="show props-btn"><span>Show all properties</span>${chevronDown}</div>
                </div>
            </div>`
    }

    renderActivityPanel() {
        return html`
            <div class="panel act-panel">
                <div class="content">
                    <div class="panel-head"><h2>Activities</h2><div class="collapse">${chevronUp}</div></div>
                    <div class="search-row">
                        <div class="filter"><svg width="26" height="22" viewBox="0 0 26 22"><path d="M1 2h24M5 10h16M10 18h6" stroke="#1f57c5" stroke-width="3" stroke-linecap="round"/></svg></div>
                        <div class="search">Search activity</div>
                    </div>
                    <div class="activities">
                        ${ACTIVITIES.map(([name, target, time], i) => html`
                            <div class="activity ${i == 0 ? "sel" : ""}">
                                ${name == "Click" ? clickIcon : target ? focusIcon : html`<span class="act-icon"></span>`}
                                <div class="act-text">
                                    <div class="act-name ${name == "Focus" ? "focus" : ""}">${name}</div>
                                    <div class="act-target">${target}</div>
                                </div>
                                ${time ? html`
                                    <span class="act-time">${time}</span>
                                    <svg class="act-chev" viewBox="0 0 32 20"><path d="M3 3l13 14L29 3" fill="none" stroke="#22357b" stroke-width="3.600" stroke-linecap="round" stroke-linejoin="round"/></svg>` : ""}
                            </div>`)}
                    </div>
                </div>
            </div>`
    }

    render() {
        return html`
            ${this.renderTopbar()}
            <div class="main">
                <div class="left">
                    <div class="url-row">
                        <div class="url-bar">
                            <span class="url-pos">24/29</span>
                            <span class="url-text">mybusinesscompass.com/ProcessAnalysis?projectguid=d255fc97-aaf1-11ee-8225-00224845ffeb&simulationIds=bpmn-2551c59d-a018-4c67-9f01-e5525fbcd9f2_Workflow...</span>
                            <svg class="url-caret" viewBox="0 0 23 15"><path d="M1 1h21L11.500 15z" fill="#1f57c5"/></svg>
                        </div>
                        <div class="btn icon-btn first"><svg width="30" height="30" viewBox="0 0 30 30"><rect x="0" y="0" width="20" height="20" rx="4" fill="#1f57c5"/><rect x="7" y="7" width="23" height="23" rx="4" fill="#1f57c5" stroke="#eff5fb" stroke-width="2"/></svg></div>
                        <div class="btn icon-btn"><svg width="30" height="30" viewBox="0 0 30 30"><path d="M14 5H2v24h24V17M17 1h12v12M29 1L13 17" fill="none" stroke="#1f57c5" stroke-width="3" /></svg></div>
                    </div>
                    <div class="replay">
                        <div class="frame-wrap">
                            ${this.renderApp()}
                            <div class="scrollbar"><div class="thumb"></div></div>
                        </div>
                    </div>
                    ${this.renderTimeline()}
                    ${this.renderControls()}
                </div>
                <div class="right">
                    <div class="handle"></div>
                    ${this.renderUserPanel()}
                    ${this.renderActivityPanel()}
                </div>
            </div>`
    }
}
